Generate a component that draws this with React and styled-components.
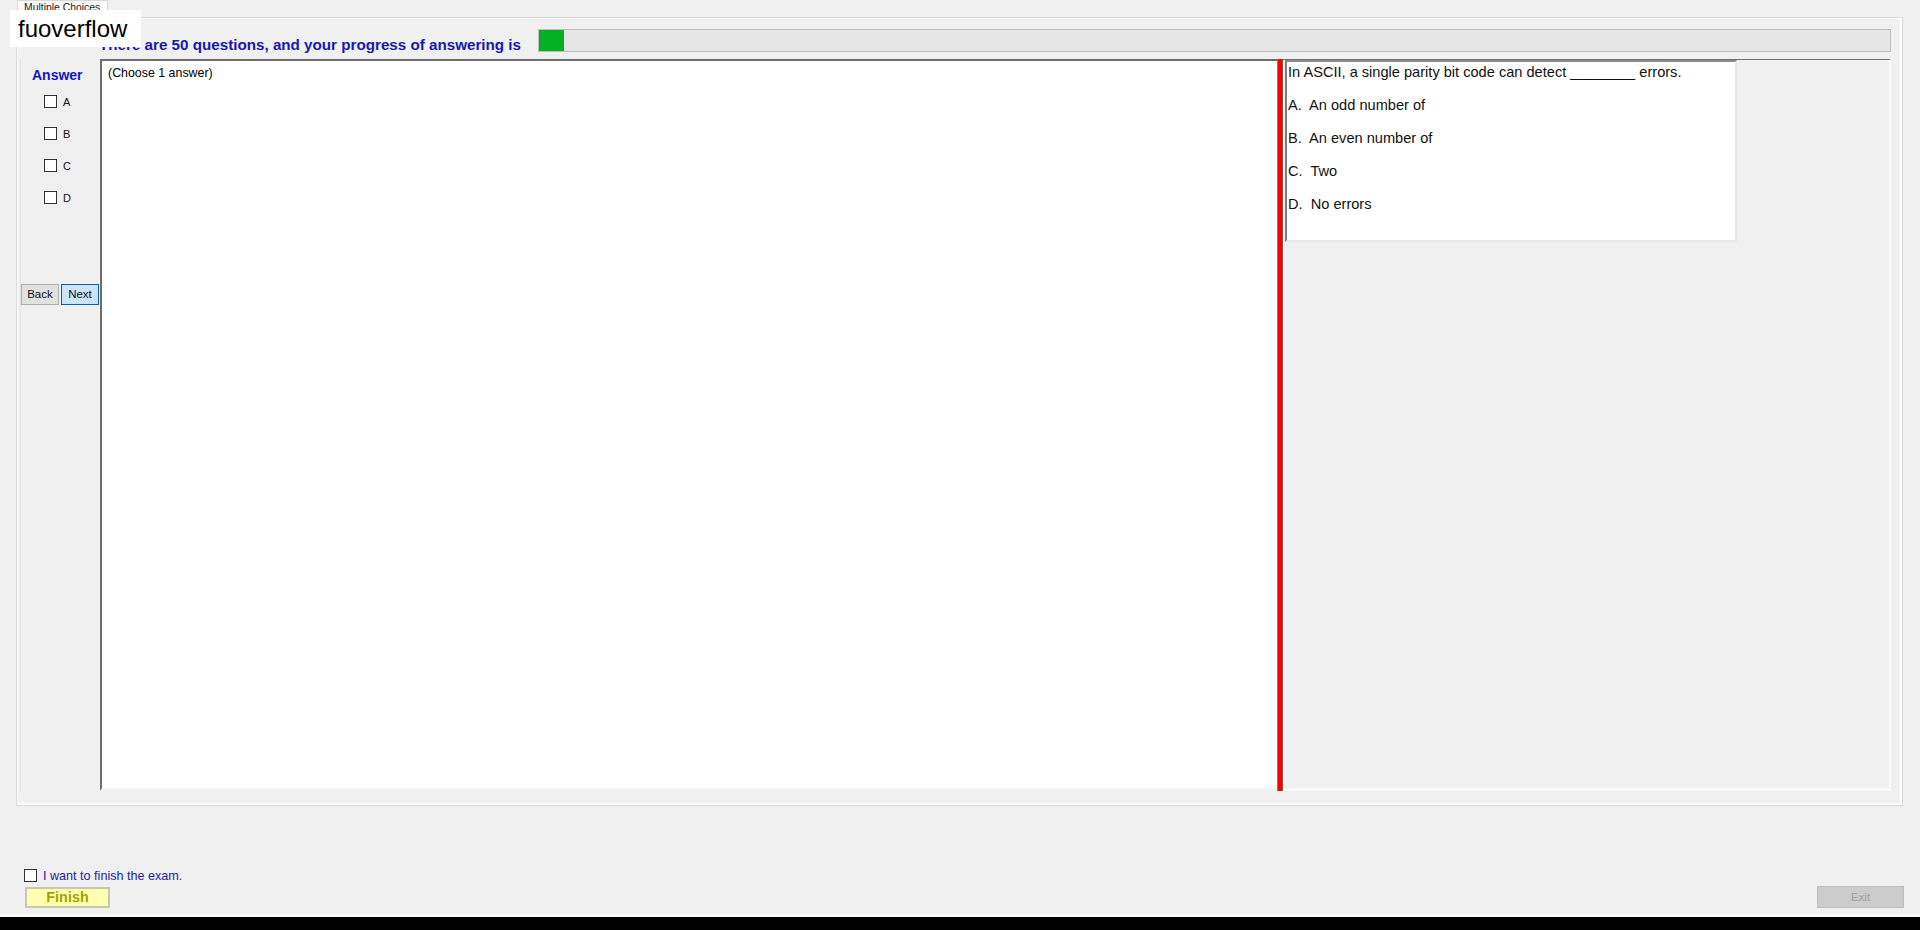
import styled, { createGlobalStyle } from "styled-components";

const GlobalStyle = createGlobalStyle`
  html, body {
    margin: 0;
    padding: 0;
    background: #f0f0f0;
    font-family: "Liberation Sans", Arial, sans-serif;
    color: #000;
  }
`;

const options = [
  { key: "A", text: "An odd number of" },
  { key: "B", text: "An even number of" },
  { key: "C", text: "Two" },
  { key: "D", text: "No errors" },
];

const App = () => {
  return (
    <>
      <GlobalStyle />
      <Page>
        <Watermark>fuoverflow</Watermark>
        <TabStrip>
          <Tab>Multiple Choices</Tab>
        </TabStrip>
        <TabPage>
          <HeaderRow>
            <Heading>There are 50 questions, and your progress of answering is</Heading>
            <ProgressBar>
              <ProgressFill style={{ width: `${(1 / 50) * 100 * 0.93}%` }} />
            </ProgressBar>
          </HeaderRow>
          <MainRow>
            <AnswerCol>
              <AnswerTitle>Answer</AnswerTitle>
              <OptionList>
                {options.map((o) => (
                  <OptionRow key={o.key}>
                    <CheckBox />
                    <OptionKey>{o.key}</OptionKey>
                  </OptionRow>
                ))}
              </OptionList>
              <NavRow>
                <NavButton>Back</NavButton>
                <NavButton $active>Next</NavButton>
              </NavRow>
            </AnswerCol>
            <TextArea>(Choose 1 answer)</TextArea>
            <Splitter />
            <RightPanel>
              <QuestionBox>
                <QuestionText>In ASCII, a single parity bit code can detect ________ errors.</QuestionText>
                {options.map((o) => (
                  <QuestionOption key={o.key}>{`${o.key}.  ${o.text}`}</QuestionOption>
                ))}
              </QuestionBox>
            </RightPanel>
          </MainRow>
        </TabPage>
        <Footer>
          <FinishGroup>
            <ConfirmRow>
              <CheckBox />
              <ConfirmLabel>I want to finish the exam.</ConfirmLabel>
            </ConfirmRow>
            <FinishButton>Finish</FinishButton>
          </FinishGroup>
          <ExitButton>Exit</ExitButton>
        </Footer>
        <BottomBar />
      </Page>
    </>
  );
};

export default App;

const Page = styled.div`
  position: relative;
  width: 1920px;
  height: 930px;
  display: flex;
  flex-direction: column;
  overflow: hidden;
`;

const Watermark = styled.div`
  position: absolute;
  left: 10px;
  top: 10px;
  width: 131px;
  height: 37px;
  box-sizing: border-box;
  padding: 0 0 0 8px;
  background: #fff;
  font-size: 24px;
  line-height: 37px;
  color: #000;
  z-index: 2;
`;

const TabStrip = styled.div`
  height: 17px;
  display: flex;
  padding-left: 17px;
`;

const Tab = styled.div`
  width: 91px;
  box-sizing: border-box;
  border: 1px solid #d9d9d9;
  border-bottom: none;
  background: #fbfbfb;
  font-size: 10.4px;
  line-height: 14px;
  padding-left: 6px;
  color: #222;
  white-space: nowrap;
`;

const TabPage = styled.div`
  margin-left: 16px;
  width: 1887px;
  height: 789px;
  box-sizing: border-box;
  border: 1px solid #d9d9d9;
  box-shadow: inset 1px 1px 0 #fff, inset -2px -2px 0 #fff;
  display: flex;
  flex-direction: column;
`;

const HeaderRow = styled.div`
  display: flex;
  align-items: center;
  height: 23px;
  margin-top: 11px;
  padding: 0 11px 0 82px;
`;

const Heading = styled.div`
  font-size: 15.2px;
  font-weight: bold;
  color: #1818b4;
  white-space: nowrap;
  margin-right: 17px;
  padding-top: 7px;
`;

const ProgressBar = styled.div`
  flex: 1;
  height: 23px;
  box-sizing: border-box;
  border: 1px solid #bcbcbc;
  background: #e6e6e6;
  display: flex;
`;

const ProgressFill = styled.div`
  height: 100%;
  background: #06b025;
`;

const MainRow = styled.div`
  display: flex;
  height: 732px;
  margin: 7px 11px 0 3px;
`;

const AnswerCol = styled.div`
  width: 80px;
  display: flex;
  flex-direction: column;
  border-left: 1px solid #e2e2e2;
  box-sizing: border-box;
`;

const AnswerTitle = styled.div`
  font-size: 14px;
  font-weight: bold;
  color: #1414cc;
  line-height: 16px;
  margin-top: 8px;
  padding-left: 11px;
`;

const OptionList = styled.div`
  display: flex;
  flex-direction: column;
  padding-left: 23px;
  margin-top: -7px;
`;

const OptionRow = styled.div`
  display: flex;
  align-items: center;
  height: 13px;
  margin-top: 19px;
`;

const CheckBox = styled.span`
  display: inline-block;
  width: 13px;
  height: 13px;
  box-sizing: border-box;
  border: 1px solid #333;
  background: #fff;
  flex-shrink: 0;
`;

const OptionKey = styled.span`
  font-size: 11px;
  margin-left: 6px;
  color: #111;
`;

const NavRow = styled.div`
  display: flex;
  gap: 2px;
  margin-top: 80px;
`;

const NavButton = styled.div`
  width: 38px;
  height: 21px;
  box-sizing: border-box;
  border: 1px solid ${(p) => (p.$active ? "#0a5ea8" : "#adadad")};
  background: ${(p) => (p.$active ? "#cce4f7" : "#e1e1e1")};
  font-size: 11.5px;
  line-height: 19px;
  text-align: center;
  color: #111;
`;

const TextArea = styled.div`
  width: 1177px;
  background: #fff;
  box-sizing: border-box;
  border-top: 2px solid #6d6d6d;
  border-left: 2px solid #6d6d6d;
  border-bottom: 3px solid #f4f4f4;
  font-size: 12.4px;
  line-height: 14px;
  padding: 5px 0 0 6px;
`;

const Splitter = styled.div`
  width: 6px;
  box-sizing: border-box;
  background: #ff0000;
  border-left: 1px solid #d06060;
  border-right: 1px solid #7a5646;
`;

const RightPanel = styled.div`
  flex: 1;
  box-sizing: border-box;
  border-top: 1px solid #6d6d6d;
  border-right: 2px solid #fafafa;
  border-bottom: 3px solid #fafafa;
  background: #f0f0f0;
  padding-left: 2px;
`;

const QuestionBox = styled.div`
  width: 452px;
  height: 182px;
  box-sizing: border-box;
  background: #fff;
  border-top: 2px solid #8a8a8a;
  border-left: 2px solid #7c7c7c;
  border-right: 2px solid #e8e8e8;
  border-bottom: 2px solid #e8e8e8;
  padding: 2px 0 0 1px;
`;

const QuestionText = styled.div`
  font-size: 14.6px;
  line-height: 17px;
  color: #111;
  white-space: pre;
`;

const QuestionOption = styled.div`
  font-size: 14.6px;
  line-height: 17px;
  color: #111;
  white-space: pre;
  margin-top: 16px;
`;

const Footer = styled.div`
  flex: 1;
  display: flex;
  justify-content: space-between;
  align-items: flex-end;
  padding: 0 16px 6px 24px;
`;

const FinishGroup = styled.div`
  display: flex;
  flex-direction: column;
  gap: 5px;
`;

const ConfirmRow = styled.div`
  display: flex;
  align-items: center;
  height: 13px;
`;

const ConfirmLabel = styled.span`
  font-size: 12.6px;
  color: #2222a8;
  margin-left: 6px;
`;

const FinishButton = styled.div`
  width: 85px;
  height: 21px;
  margin-left: 1px;
  box-sizing: border-box;
  border: 2px solid #c8c8b0;
  background: #ffffb0;
  font-size: 14.4px;
  font-weight: bold;
  color: #a3a300;
  line-height: 17px;
  text-align: center;
`;

const ExitButton = styled.div`
  width: 87px;
  height: 22px;
  box-sizing: border-box;
  border: 1px solid #bdbdbd;
  background: #cccccc;
  font-size: 11.5px;
  line-height: 20px;
  color: #a0a0a0;
  text-align: center;
`;

const BottomBar = styled.div`
  height: 13px;
  background: #000;
  border-top: 3px solid #f8f8f8;
`;
